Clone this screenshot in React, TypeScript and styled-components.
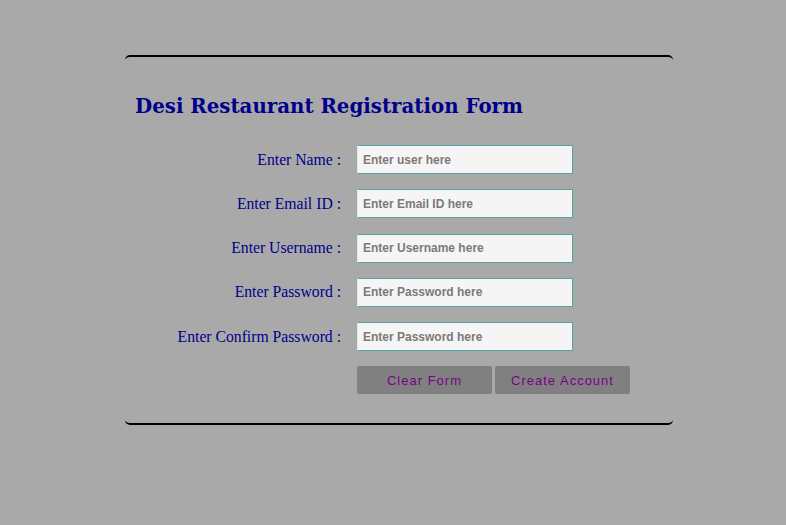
import React from "react";
import styled, { createGlobalStyle } from "styled-components";

const GlobalStyle = createGlobalStyle`
  html, body {
    margin: 0;
    background: #a9a9a9;
  }
`;

const Page = styled.div`
  padding: 55px 0 0 125px;
`;

const Card = styled.form`
  width: 548px;
  box-sizing: border-box;
  border-top: 2px solid #000;
  border-bottom: 2px solid #000;
  border-radius: 5px;
  padding: 34px 10px 29px;
`;

const Title = styled.h1`
  margin: 0 0 24px;
  font-family: "DejaVu Serif", Georgia, serif;
  font-size: 19.8px;
  font-weight: bold;
  color: #00008b;
  line-height: 30px;
`;

const Grid = styled.div`
  display: grid;
  grid-template-columns: 206px 216px;
  column-gap: 16px;
  row-gap: 15.25px;
  align-items: center;
`;

const Label = styled.label`
  text-align: right;
  font-family: "Liberation Serif", "Times New Roman", serif;
  font-size: 15.7px;
  color: #00008b;
`;

const Input = styled.input`
  box-sizing: border-box;
  width: 216px;
  height: 29px;
  padding: 0 5px;
  border: 1px solid #4fa5a5;
  border-left-color: #e8e8e8;
  background: #f5f5f5;
  font-family: "Liberation Sans", Arial, sans-serif;
  font-size: 12px;
  font-weight: bold;
  outline: none;

  &::placeholder {
    color: #7a7a7a;
  }
`;

const Buttons = styled.div`
  grid-column: 2;
  display: flex;
  gap: 3px;
  white-space: nowrap;
`;

const Button = styled.button`
  flex-shrink: 0;
  width: 135px;
  height: 28px;
  border: none;
  border-radius: 2px;
  background: #808080;
  color: #7a0089;
  font-family: "Liberation Sans", Arial, sans-serif;
  font-size: 13px;
  letter-spacing: 1px;
  cursor: pointer;
`;

const fields = [
  { label: "Enter Name :", placeholder: "Enter user here", type: "text" },
  { label: "Enter Email ID :", placeholder: "Enter Email ID here", type: "email" },
  { label: "Enter Username :", placeholder: "Enter Username here", type: "text" },
  { label: "Enter Password :", placeholder: "Enter Password here", type: "password" },
  { label: "Enter Confirm Password :", placeholder: "Enter Password here", type: "password" },
];

export default function App() {
  return (
    <Page>
      <GlobalStyle />
      <Card onSubmit={(e) => e.preventDefault()}>
        <Title>Desi Restaurant Registration Form</Title>
        <Grid>
          {fields.map((f, i) => (
            <React.Fragment key={i}>
              <Label htmlFor={`f${i}`}>{f.label}</Label>
              <Input id={`f${i}`} type={f.type} placeholder={f.placeholder} />
            </React.Fragment>
          ))}
          <Buttons>
            <Button type="reset">Clear Form</Button>
            <Button type="submit">Create Account</Button>
          </Buttons>
        </Grid>
      </Card>
    </Page>
  );
}
